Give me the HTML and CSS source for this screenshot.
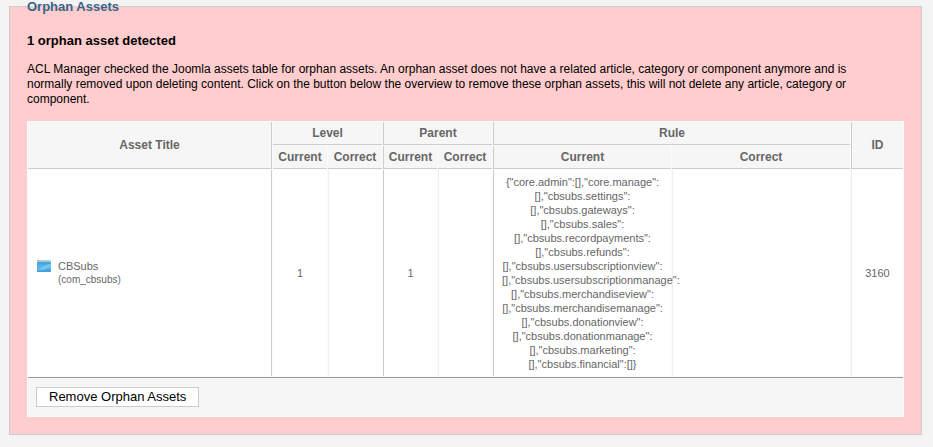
FILE: index.html
```html
<!DOCTYPE html>
<html lang="en">
  <head>
    <meta charset="UTF-8" />
    <meta name="viewport" content="width=device-width, initial-scale=1.0" />
    <title>Orphan Assets</title>
    <link rel="stylesheet" href="styles.css">
  </head>
  <body>
    <form action="#" method="post">
      <fieldset class="panel">
        <legend>Orphan Assets</legend>
        <h3>1 orphan asset detected</h3>
        <p>
          ACL Manager checked the Joomla assets table for orphan assets. An orphan asset does not have a related article, category or component anymore and is<br>
          normally removed upon deleting content. Click on the button below the overview to remove these orphan assets, this will not delete any article, category or<br>
          component.
        </p>
        <table class="adminlist">
          <colgroup>
            <col class="col-title">
            <col class="col-small" span="4">
            <col class="col-rule" span="2">
            <col class="col-id">
          </colgroup>
          <thead>
            <tr>
              <th class="group-end" rowspan="2">Asset Title</th>
              <th colspan="2">Level</th>
              <th class="group" colspan="2">Parent</th>
              <th class="group" colspan="2">Rule</th>
              <th class="group" rowspan="2">ID</th>
            </tr>
            <tr>
              <th>Current</th>
              <th>Correct</th>
              <th class="group">Current</th>
              <th>Correct</th>
              <th class="group">Current</th>
              <th>Correct</th>
            </tr>
          </thead>
          <tbody>
            <tr>
              <td class="group-end">
                <div class="asset">
                  <svg class="icon" width="16" height="16" viewBox="0 0 16 16" aria-hidden="true">
                    <defs>
                      <linearGradient id="sky" x1="0" y1="0" x2="0" y2="1">
                        <stop offset="0" stop-color="#3b9fdc" />
                        <stop offset="0.5" stop-color="#5bb8ea" />
                        <stop offset="1" stop-color="#3a9ddb" />
                      </linearGradient>
                    </defs>
                    <rect x="1" y="2" width="14" height="12" rx="1" fill="#a9cfd8" />
                    <rect x="1" y="4" width="14" height="10" rx="1" fill="url(#sky)" />
                    <path d="M1 12 Q5 10 8 8 Q11 6 15 6 V9 Q10 10 7 12 Z" fill="#8fd2f4" opacity="0.6" />
                    <rect x="2" y="2" width="1" height="1" fill="#e08c4c" />
                    <rect x="4" y="2" width="1" height="1" fill="#e8cc7c" />
                    <rect x="6" y="2" width="1" height="1" fill="#b8d890" />
                  </svg>
                  <div>
                    CBSubs
                    <small>(com_cbsubs)</small>
                  </div>
                </div>
              </td>
              <td>1</td>
              <td></td>
              <td class="group">1</td>
              <td></td>
              <td class="group rule">
                {"core.admin":[],"core.manage":<br>
                [],"cbsubs.settings":<br>
                [],"cbsubs.gateways":<br>
                [],"cbsubs.sales":<br>
                [],"cbsubs.recordpayments":<br>
                [],"cbsubs.refunds":<br>
                [],"cbsubs.usersubscriptionview":<br>
                [],"cbsubs.usersubscriptionmanage":<br>
                [],"cbsubs.merchandiseview":<br>
                [],"cbsubs.merchandisemanage":<br>
                [],"cbsubs.donationview":<br>
                [],"cbsubs.donationmanage":<br>
                [],"cbsubs.marketing":<br>
                [],"cbsubs.financial":[]}
              </td>
              <td></td>
              <td>3160</td>
            </tr>
          </tbody>
          <tfoot>
            <tr>
              <td colspan="8"><button type="submit">Remove Orphan Assets</button></td>
            </tr>
          </tfoot>
        </table>
      </fieldset>
    </form>
  </body>
</html>
```
FILE: styles.css
```css
body {
  background-color: #f4f4f4;
  margin: 0;
  font-family: "Liberation Sans", Arial, sans-serif;
  font-size: 12px;
  line-height: 15px;
  color: #000;
}
.panel {
  margin: 0 11px 12px 9px;
  padding: 0 17px 17px;
  border: 1px solid #ccc;
  background-color: #ffcdcd;
}
legend {
  padding: 0;
  font-size: 13px;
  font-weight: bold;
  line-height: 13px;
  color: #33658a;
}
h3 {
  margin: 20px 0 14px;
  font-size: 13px;
  line-height: 15px;
}
p {
  margin: 0 0 14px;
}
.adminlist {
  width: 100%;
  table-layout: fixed;
  border-spacing: 1px;
  background-color: #fbfbfb;
  color: #666;
  font-size: 11px;
  line-height: 14px;
}
.col-title {
  width: 244px;
}
.col-small {
  width: 54px;
}
.col-id {
  width: 52px;
}
.adminlist th {
  padding: 4px 0;
  border-bottom: 1px solid #ccc;
  background-color: #f6f6f6;
  font-size: 12px;
  text-align: center;
}
.adminlist tbody td {
  padding: 5px 8px;
  border-left: 1px solid #eee;
  background-color: #fff;
  text-align: center;
}
.adminlist tbody td.group-end,
.adminlist tbody td.group-end + td {
  border-left: none;
}
.adminlist th.group,
.adminlist tbody td.group {
  border-left: 1px solid #ccc;
}
.adminlist th.group-end,
.adminlist tbody td.group-end {
  border-right: 1px solid #ccc;
}
.adminlist .rule {
  white-space: nowrap;
}
.adminlist tfoot td {
  padding: 9px 8px;
  border-top: 1px solid #999;
  background-color: #f6f6f6;
}
.asset {
  display: flex;
  gap: 6px;
  text-align: left;
}
.icon {
  margin-top: -1px;
}
small {
  display: block;
  font-size: 10px;
}
button {
  display: block;
  height: 20px;
  padding: 0 12px;
  border: 1px solid #ccc;
  background-color: #fff;
  color: #000;
  font-family: inherit;
  font-size: 13px;
  line-height: 18px;
}
```
